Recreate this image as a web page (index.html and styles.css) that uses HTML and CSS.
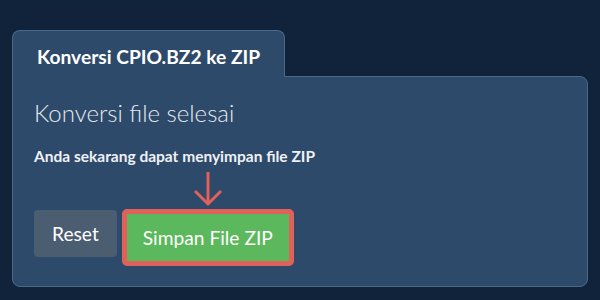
FILE: index.html
```html
<!DOCTYPE html>
<html lang="id">
<head>
    <meta charset="UTF-8">
    <meta name="viewport" content="width=device-width, initial-scale=1.0">
    <title>Konversi CPIO.BZ2 ke ZIP</title>
    <link rel="stylesheet" href="styles.css">
</head>
<body>

<div class="converter">
    <div class="tab">Konversi CPIO.BZ2 ke ZIP</div>
    <div class="panel">
        <h2 class="panel-title">Konversi file selesai</h2>
        <p class="panel-note">Anda sekarang dapat menyimpan file ZIP</p>
        <div class="actions">
            <button class="btn btn-reset">Reset</button>
            <div class="save-wrap">
                <svg class="hint-arrow" width="30" height="36" viewBox="0 0 30 36">
                    <path d="M15 1 V33 M2 20 L15 33 L28 20" fill="none" stroke="#e0605a" stroke-width="3"/>
                </svg>
                <button class="btn btn-save">Simpan File ZIP</button>
            </div>
        </div>
    </div>
</div>

</body>
</html>
```

FILE: styles.css
```css
body {
    margin: 0;
    padding: 30px 12px 0;
    background-color: #11233a;
    font-family: 'Lato', 'Liberation Sans', sans-serif;
    color: #f2f5f8;
}

.converter {
    display: flex;
    flex-direction: column;
    align-items: flex-start;
}

.tab {
    position: relative;
    z-index: 1;
    height: 46px;
    line-height: 51px;
    padding: 0 24px;
    margin-bottom: -1px;
    background: #2e4a6a;
    border: 1px solid #4c6889;
    border-bottom: none;
    border-radius: 8px 8px 0 0;
    font-size: 19.2px;
    font-weight: 700;
    color: #ffffff;
}

.panel {
    align-self: stretch;
    background: #2e4a6a;
    border: 1px solid #4c6889;
    border-radius: 0 8px 8px 8px;
    padding: 20px 20px 20px 21px;
}

.panel-title {
    margin: 0;
    font-size: 24px;
    font-weight: 300;
    line-height: 32px;
    color: #e4e9ef;
}

.panel-note {
    margin: 16px 0 0;
    font-size: 15.5px;
    font-weight: 700;
    line-height: 22px;
    color: #eef1f5;
}

.actions {
    display: flex;
    align-items: flex-start;
    gap: 5px;
    margin-top: 42px;
}

.btn {
    font-family: inherit;
    font-size: 19.2px;
    color: #ffffff;
    border: none;
    cursor: pointer;
}

.btn-reset {
    margin-top: 1px;
    height: 47px;
    padding: 0 18px;
    background: #4b5d71;
    border-radius: 4px;
}

.save-wrap {
    position: relative;
}

.hint-arrow {
    position: absolute;
    left: 50%;
    top: -38px;
    margin-left: -15px;
}

.btn-save {
    height: 57px;
    padding: 0 16px;
    background: #5cb85c;
    border: 5px solid #e0605a;
    border-radius: 5px;
}
```
